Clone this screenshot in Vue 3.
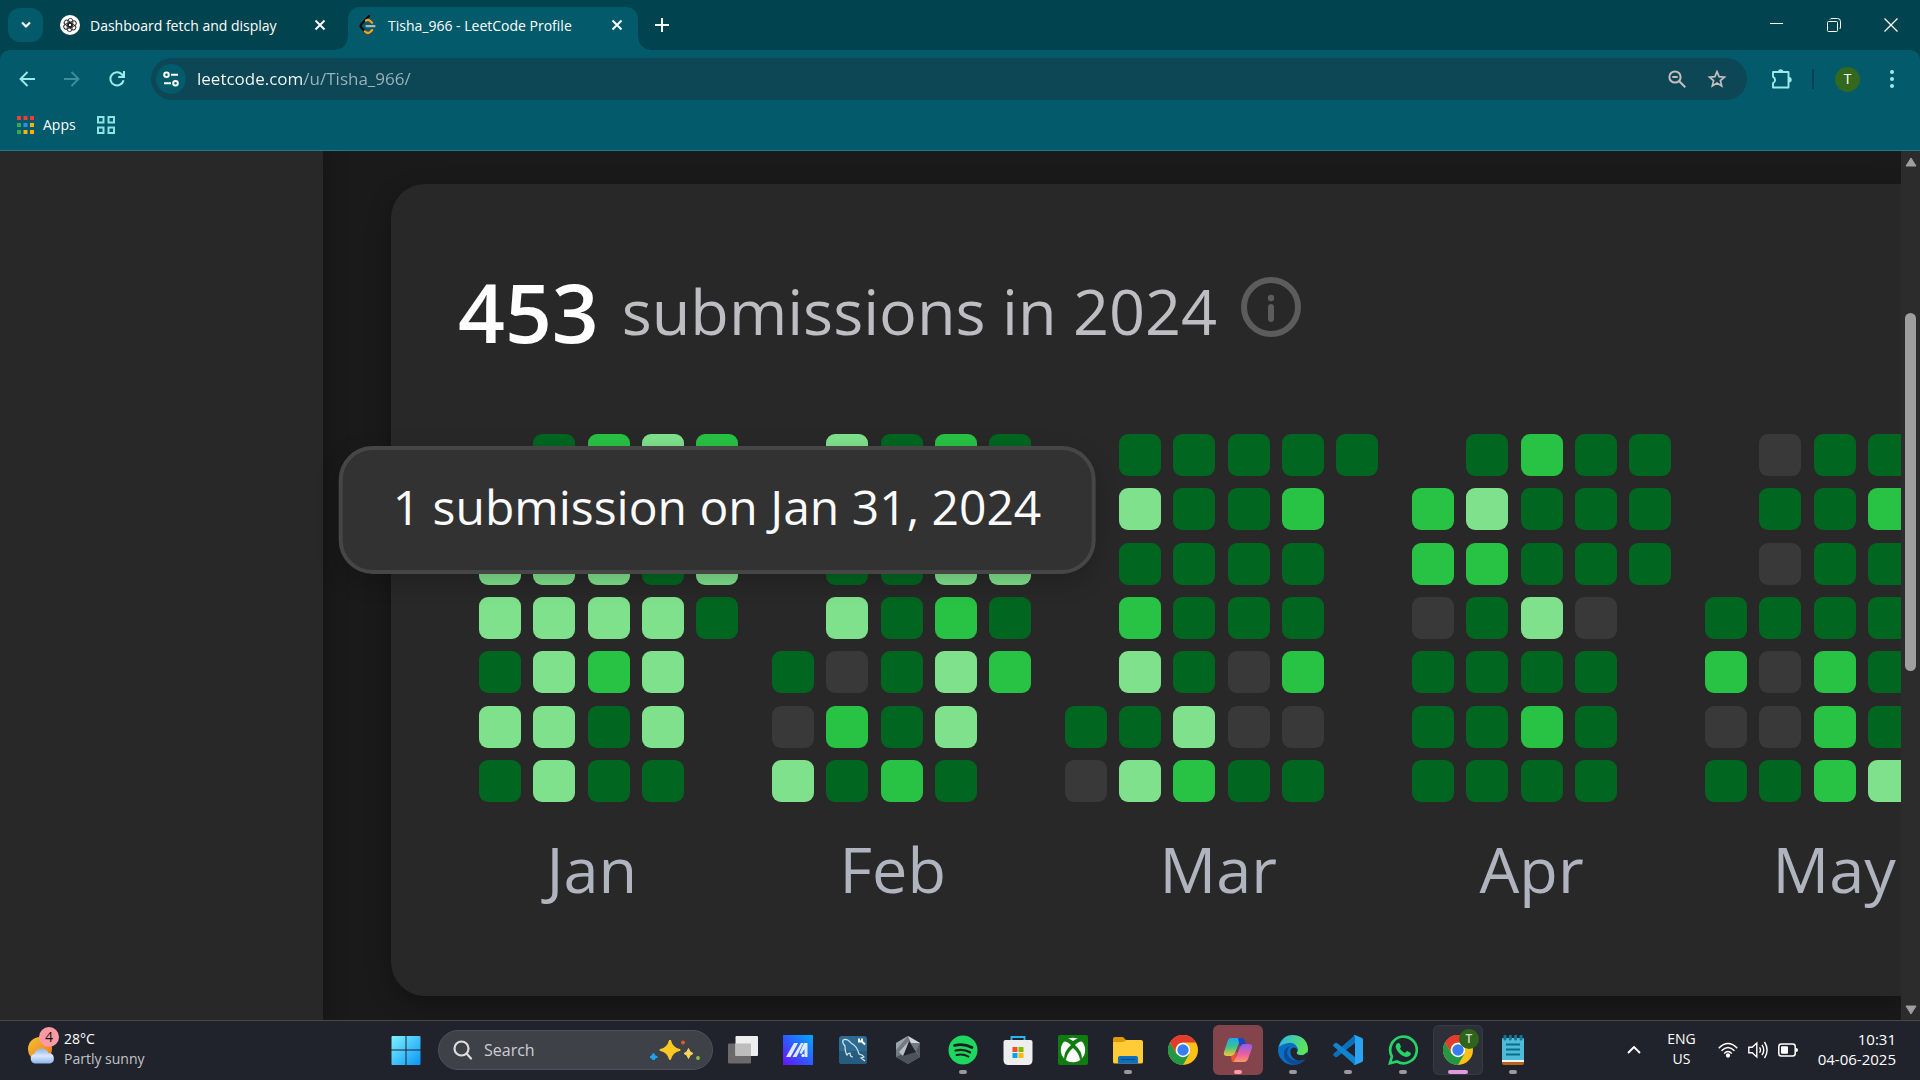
<script setup>
import { ref } from 'vue'

const url = ref('leetcode.com/u/Tisha_966/')
const query = ref('')

const levels = { d: 'low', m: 'mid', l: 'high', e: 'none', '.': 'blank' }

// One string per weekday, Sunday first; one letter per week.
const months = [
  { name: 'Jan', rows: ['.dmlm', 'llldl', 'llldl', 'lllld', 'dlml.', 'lldl.', 'dldd.'] },
  { name: 'Feb', rows: ['.ldmd', '.dddd', '.ddll', '.ldmd', 'dedlm', 'emdl.', 'ldmd.'] },
  { name: 'Mar', wide: true, rows: ['.ddddd', '.lddm.', '.dddd.', '.mddd.', '.ldem.', 'ddlee.', 'elmdd.'] },
  { name: 'Apr', rows: ['.dmdd', 'mlddd', 'mmddd', 'edle.', 'dddd.', 'ddmd.', 'dddd.'] },
  { name: 'May', rows: ['.edd.', '.ddm.', '.edd.', 'dddd.', 'memd.', 'eemd.', 'ddml.'] },
].map((m) => ({ ...m, cells: m.rows.join('').split('').map((c) => levels[c]) }))
</script>

<template>
  <div class="screen">
    <header class="browser">
      <div class="strip">
        <button class="tab-search" aria-label="Search tabs">
          <svg width="12" height="8" viewBox="0 0 12 8"><path d="M2 1.5l4 4 4-4" fill="none" stroke="#fff" stroke-width="2.2" /></svg>
        </button>
        <div class="tab">
          <svg class="favicon" width="20" height="20" viewBox="0 0 20 20">
            <circle cx="10" cy="10" r="10" fill="#fff" />
            <g fill="none" stroke="#222" stroke-width="0.9">
              <rect v-for="a in 6" :key="a" x="8" y="3.4" width="4.8" height="8.4" rx="2.4" :transform="`rotate(${a * 60} 10 10)`" />
            </g>
          </svg>
          <span class="tab-title">Dashboard fetch and display</span>
          <button class="tab-close" aria-label="Close tab">
            <svg width="12" height="12" viewBox="0 0 12 12"><path d="M1.5 1.5l9 9M10.5 1.5l-9 9" stroke="#fff" stroke-width="1.9" /></svg>
          </button>
        </div>
        <div class="tab active">
          <svg class="favicon" width="20" height="20" viewBox="0 0 20 20" fill="none" stroke-width="2.2" stroke-linecap="round">
            <path d="M11 1L3.3 9.3q-1.4 1.6 0 3.2l3.5 3.8" stroke="#0a0a0a" />
            <path d="M8 5.5q2-1.5 4 .3l2 1.9M6.8 16.3q2.800 3 5.400.7l1.900-1.900" stroke="#ffa116" />
            <path d="M8.5 11.2h8" stroke="#b3b3b3" />
          </svg>
          <span class="tab-title">Tisha_966 - LeetCode Profile</span>
          <button class="tab-close" aria-label="Close tab">
            <svg width="12" height="12" viewBox="0 0 12 12"><path d="M1.5 1.5l9 9M10.5 1.5l-9 9" stroke="#fff" stroke-width="1.9" /></svg>
          </button>
        </div>
        <button class="new-tab" aria-label="New tab">
          <svg width="14" height="14" viewBox="0 0 14 14"><path d="M7 0v14M0 7h14" stroke="#fff" stroke-width="2" /></svg>
        </button>
        <div class="window-controls">
          <button aria-label="Minimize"><svg width="14" height="14" viewBox="0 0 14 14"><path d="M0 5.5h13" stroke="#fff" /></svg></button>
          <button aria-label="Restore">
            <svg width="14" height="14" viewBox="0 0 14 14" fill="none" stroke="#fff"><rect x=".5" y="3.5" width="10" height="10" rx="1" /><path d="M3 1.5q.5-1 2-1h5.500q3 0 3 3V9q0 1.500-1 2" /></svg>
          </button>
          <button aria-label="Close"><svg width="14" height="14" viewBox="0 0 14 14"><path d="M.5.5l13 13M13.5.5l-13 13" stroke="#fff" stroke-width="1.3" /></svg></button>
        </div>
      </div>

      <div class="toolbar">
        <nav class="nav">
          <button aria-label="Back"><svg width="16" height="16" viewBox="0 0 16 16" fill="none" stroke="#9cebea" stroke-width="1.9"><path d="M16 8H1.500M8.500 1L1.500 8l7 7" /></svg></button>
          <button aria-label="Forward"><svg width="16" height="16" viewBox="0 0 16 16" fill="none" stroke="#3e8d9b" stroke-width="1.9"><path d="M0 8h14.500M7.500 1l7 7-7 7" /></svg></button>
          <button aria-label="Reload"><svg width="16" height="16" viewBox="0 0 16 16" fill="none" stroke="#9cebea" stroke-width="2"><path d="M14.500 9.200A6.600 6.600 0 1 1 12.800 3.300l1.700 1.900M15 0v5.900H9.200" /></svg></button>
        </nav>
        <form class="omnibox" @submit.prevent>
          <button type="button" class="site-info" aria-label="View site information">
            <svg width="16" height="16" viewBox="0 0 16 16" fill="none" stroke="#fff" stroke-width="2"><circle cx="3.5" cy="3.8" r="2.3" /><path d="M8 3.800h7M1 12.200h7" /><circle cx="12.5" cy="12.2" r="2.3" /></svg>
          </button>
          <input v-model="url" class="address" type="text" aria-label="Address and search bar" />
          <button type="button" aria-label="Zoom">
            <svg width="18" height="18" viewBox="0 0 18 18" fill="none" stroke="#c6bdbd" stroke-width="2"><circle cx="7" cy="7" r="5.6" /><path d="M11 11l6.300 6.300M4.300 7h5.400" /></svg>
          </button>
          <button type="button" aria-label="Bookmark this tab">
            <svg width="20" height="20" viewBox="0 0 20 20" fill="none" stroke="#c6bdbd" stroke-width="1.7"><path d="M10 2.600l2.100 5 5.400.5-4.100 3.500 1.300 5.300L10 14.100l-4.700 2.800 1.300-5.300L2.500 8.100l5.400-.5z" /></svg>
          </button>
        </form>
        <button class="extensions" aria-label="Extensions">
          <svg width="22" height="22" viewBox="0 0 22 22"><path d="M2 4h15.500v15.500H2v-4.300a3.500 3.500 0 0 0 0-6.400z" fill="none" stroke="#9cebea" stroke-width="1.9" stroke-linejoin="round" /><path d="M7 4a2.700 2.700 0 0 1 5.400 0zM18 9a2.700 2.700 0 0 1 0 5.400z" fill="#9cebea" /></svg>
        </button>
        <span class="divider"></span>
        <button class="avatar" aria-label="Profile">T</button>
        <button class="more" aria-label="More">
          <svg width="6" height="18" viewBox="0 0 6 18" fill="#9cebea"><circle cx="3" cy="2" r="2" /><circle cx="3" cy="9" r="2" /><circle cx="3" cy="16" r="2" /></svg>
        </button>
      </div>

      <div class="bookmarks">
        <a href="#apps" class="bookmark">
          <svg width="17" height="18" viewBox="0 0 17 18">
            <path d="M0 0h4v4H0zM6.500 0h4v4h-4zM13 0h4v4h-4z" fill="#ee3e36" />
            <path d="M0 7h4v4H0zM0 14h4v4H0z" fill="#34a853" /><path d="M6.500 7h4v4h-4z" fill="#2d8cf0" />
            <path d="M13 7h4v4h-4zM6.500 14h4v4h-4zM13 14h4v4h-4z" fill="#fbb10a" />
          </svg>
          Apps
        </a>
        <button class="groups" aria-label="Tab groups">
          <svg width="18" height="18" viewBox="0 0 18 18" fill="none" stroke="#8fe3e4" stroke-width="2"><path d="M1 1h5.500v5.500H1zM11.500 1H17v5.500h-5.500zM1 11.500h5.500V17H1zM11.500 11.500H17V17h-5.500z" /></svg>
        </button>
      </div>
    </header>

    <main class="page">
      <aside class="side"></aside>
      <section class="card">
        <h1 class="heading">
          <strong>453</strong>
          <span>submissions in 2024</span>
          <svg class="info" width="60" height="60" viewBox="0 0 60 60" fill="#5c5c5c"><circle cx="30" cy="30" r="27" fill="none" stroke="#5c5c5c" stroke-width="6" /><circle cx="30" cy="21" r="3.2" /><rect x="27" y="27" width="6" height="18" rx="3" /></svg>
        </h1>
        <div class="calendar">
          <div v-for="m in months" :key="m.name" class="month" :class="{ wide: m.wide }">
            <div class="days"><i v-for="(level, i) in m.cells" :key="i" :class="level"></i></div>
            <span class="month-name">{{ m.name }}</span>
          </div>
          <div class="tooltip" role="tooltip">1 submission on Jan 31, 2024</div>
        </div>
      </section>
      <div class="scrollbar">
        <svg width="12" height="10" viewBox="0 0 12 10"><path d="M6 1l5 8H1z" fill="#9f9f9f" stroke="#9f9f9f" stroke-linejoin="round" /></svg>
        <div class="track"><div class="thumb"></div></div>
        <svg width="12" height="10" viewBox="0 0 12 10"><path d="M6 9l5-8H1z" fill="#9f9f9f" stroke="#9f9f9f" stroke-linejoin="round" /></svg>
      </div>
    </main>

    <footer class="taskbar">
      <button class="weather">
        <span class="weather-icon">
          <svg width="28" height="28" viewBox="0 0 28 28">
            <defs>
              <linearGradient id="sun" x1="0" y1="0" x2="1" y2="1"><stop stop-color="#f5c433" /><stop offset="1" stop-color="#f07318" /></linearGradient>
              <linearGradient id="cloud" x1="0" y1="0" x2="0" y2="1"><stop stop-color="#8fb4f3" /><stop offset=".5" stop-color="#dbe7fb" /><stop offset="1" stop-color="#8db2f0" /></linearGradient>
            </defs>
            <circle cx="12" cy="13" r="12" fill="url(#sun)" />
            <path d="M7 27.500a5 5 0 0 1-.5-9.800 7.500 7.500 0 0 1 14-.6 5.300 5.300 0 0 1 1.500 10.400z" fill="url(#cloud)" />
          </svg>
          <span class="badge">4</span>
        </span>
        <span class="two-line"><span>28°C</span><span class="dim">Partly sunny</span></span>
      </button>

      <div class="dock">
        <button class="app start" aria-label="Start">
          <svg width="30" height="30" viewBox="0 0 30 30">
            <defs><linearGradient id="win" x1="0" y1="0" x2="1" y2="1"><stop stop-color="#7df3ff" /><stop offset="1" stop-color="#0a94f7" /></linearGradient></defs>
            <path d="M1.500 1H14.500v13.500H.5V2q0-1 1-1zM15.500 1h13q1 0 1 1v12.500H15.500zM.5 15.500h14V30h-13q-1 0-1-1zM15.500 15.500h14V29q0 1-1 1h-13z" fill="url(#win)" />
          </svg>
        </button>
        <label class="search">
          <svg width="20" height="20" viewBox="0 0 20 20" fill="none" stroke="#dcdcdf" stroke-width="2.2" stroke-linecap="round"><circle cx="8.5" cy="8.5" r="7" /><path d="M13.500 13.500l4.500 5" /></svg>
          <input v-model="query" type="search" placeholder="Search" aria-label="Search" />
          <svg width="50" height="20" viewBox="0 0 50 20">
            <path d="M20 .5q2 8 9.500 9.500-7.500 1.500-9.500 9-2-7.500-9.500-9 7.500-1.500 9.500-9.500z" fill="#fcc822" stroke="#fcc822" stroke-width="2" stroke-linejoin="round" />
            <path d="M38.500 8.500q1 4 4.500 5-3.500 1-4.500 5-1-4-4.500-5 3.500-1 4.500-5z" fill="#fcd35c" stroke="#fcd35c" stroke-linejoin="round" />
            <path d="M3.500 13q.5 3 4 4-3 .5-4 4-.5-3-4-4 3.500-1 4-4z" fill="#18a8ee" stroke="#18a8ee" />
            <circle cx="33" cy="2.500" r="2" fill="#e5582b" /><circle cx="48" cy="18" r="1.900" fill="#8bc34a" />
          </svg>
        </label>
        <button class="app" aria-label="Task view">
          <svg width="30" height="30" viewBox="0 0 30 30"><rect y="8.500" width="23" height="20" rx="1" fill="#6b6969" /><rect x="7.500" y="1" width="22.500" height="20" rx="1" fill="#eee" /><path d="M7.500 8.500H23V21H7.500z" fill="#bdbdbd" /></svg>
        </button>
        <button class="app" aria-label="MyASUS">
          <svg width="30" height="30" viewBox="0 0 30 30"><defs><linearGradient id="my" x1="0" y1="1" x2="1" y2="0"><stop stop-color="#6a12fb" /><stop offset=".5" stop-color="#2d5cff" /><stop offset="1" stop-color="#00aaff" /></linearGradient></defs><path d="M0 0h30v30H0z" fill="url(#my)" /><path d="M3 22L11 8h4L7.500 22zM9.500 22L18 8h2.500L13.500 22zM21 8h3.500v14h-3V14l-3 5-2-1z" fill="#dfe9ff" /><circle cx="20" cy="20.500" r="1.500" fill="#fff" /></svg>
        </button>
        <button class="app" aria-label="MySQL Workbench">
          <svg width="30" height="30" viewBox="0 0 30 30"><rect x="1" y="1" width="28" height="28" rx="3" fill="#2e6b92" /><path d="M1 16h28v10q0 3-3 3H4q-3 0-3-3z" fill="#265c7e" /><path d="M5 5q4-2 8 3 6 3 8 11 4 1 5 3l-3 1 4 3M5 5q-1 3 2 6 0 6 2 9 1-2 3-2 0 4 3 4" fill="none" stroke="#d8e6ef" stroke-width="1.2" /><path d="M21 3.500v3h3v-3M24 6.500l3 3" fill="none" stroke="#fff" stroke-width="2" /></svg>
        </button>
        <button class="app" aria-label="Armoury Crate">
          <svg width="30" height="30" viewBox="0 0 30 30"><path d="M15 1l12 7v14l-12 7-12-7V8z" fill="#737a82" /><path d="M15 1l12 7-9 0z" fill="#d2d6da" /><path d="M15 1L3 8v7z" fill="#9da3aa" /><path d="M27 8v14l-4-6z" fill="#535960" /><path d="M3 22l7-3 12-3 5 6-12 7z" fill="#4d535a" /><path d="M16 6l7 11-13 4z" fill="#20242b" /><path d="M16 6l-6 15-4-4z" fill="#b9bec4" /></svg>
        </button>
        <button class="app running" aria-label="Spotify">
          <svg width="30" height="30" viewBox="0 0 30 30"><circle cx="15" cy="15" r="14.500" fill="#1ed760" /><g fill="none" stroke="#17201c" stroke-linecap="round"><path d="M6.500 10.500q9-2.500 17.500 2" stroke-width="2.7" /><path d="M7.500 15.500q8-2 14.500 1.800" stroke-width="2.3" /><path d="M8.500 20q6.500-1.500 12 1.600" stroke-width="1.9" /></g></svg>
        </button>
        <button class="app" aria-label="Microsoft Store">
          <svg width="30" height="30" viewBox="0 0 30 30"><path d="M8.500 6.500V2h13v4.500" fill="none" stroke="#27b6f0" stroke-width="1.9" /><path d="M.5 7q0-2 2-2h25q2 0 2 2v18q0 5-5 5h-19q-5 0-5-5z" fill="#eee" /><path d="M9.500 12h5v5h-5z" fill="#f25022" /><path d="M15.500 12h5v5h-5z" fill="#7fba00" /><path d="M9.500 18h5v5h-5z" fill="#00a4ef" /><path d="M15.500 18h5v5h-5z" fill="#ffb900" /></svg>
        </button>
        <button class="app" aria-label="Xbox">
          <svg width="30" height="30" viewBox="0 0 30 30"><rect width="30" height="30" rx="2" fill="#107c10" /><circle cx="15" cy="15" r="12.200" fill="#fff" /><path d="M8 4q3-1 7 2 4-3 7-2l3 3q-3-2-8 3 7 6 7 14l-2 1q-1-7-7-12-6 5-7 12l-2-1q0-8 7-14-5-5-8-3z" fill="#107c10" /></svg>
        </button>
        <button class="app running" aria-label="File Explorer">
          <svg width="30" height="30" viewBox="0 0 30 30"><path d="M0 4q0-2 2-2h8l3 3-3 3H0z" fill="#e09a05" /><path d="M0 7h10l3-2h15q2 0 2 2v20q0 1.500-2 1.500H2Q0 28.500 0 27z" fill="#ffcb37" /><path d="M5 28.500V23q0-2 2-2h16q2 0 2 2v5.500z" fill="#0b70c0" /><path d="M8 24.500h14" stroke="#0a4f8c" stroke-width="1.2" /></svg>
        </button>
        <button class="app" aria-label="Google Chrome">
          <svg width="30" height="30" viewBox="0 0 30 30"><circle cx="15" cy="15" r="15" fill="#fbc116" /><path d="M2 7.500a15 15 0 0 1 26 0H15z" fill="#e33b2e" /><path d="M15 7.500a7.500 7.500 0 0 0-6.500 11.200L2 7.500a15 15 0 0 1 13-7.500z" fill="#e33b2e" /><path d="M2 7.500A15 15 0 0 0 15 30l6.500-11.200H8.500z" fill="#249745" /><circle cx="15" cy="15" r="7.200" fill="#fff" /><circle cx="15" cy="15" r="5.700" fill="#377ef2" /></svg>
        </button>
        <button class="app running attention" aria-label="Copilot">
          <svg width="30" height="30" viewBox="0 0 30 30"><defs><linearGradient id="cpa" x1="0" y1="0" x2="0" y2="1"><stop stop-color="#1aa9f3" /><stop offset=".5" stop-color="#3fc38b" /><stop offset="1" stop-color="#f4c53a" /></linearGradient><linearGradient id="cpb" x1="0" y1="0" x2="0" y2="1"><stop stop-color="#8d5df0" /><stop offset=".6" stop-color="#ee5f9d" /><stop offset="1" stop-color="#fb9a64" /></linearGradient></defs><path d="M5 5q1-2 3-2h11l-3 5-4 10q-1 3-4 3H4q-4 0-3-4z" fill="url(#cpa)" /><path d="M25 24q-1 3-4 3H10l3-5 4-10q1-3 4-3h5q4 0 3 4z" fill="url(#cpb)" /><path d="M15 3h4q2 0 2.500 2L23 9h-2q-3 0-4 3z" fill="#1747c4" /><path d="M8 21q3 0 4-3l2-1-2 7q-.5 3-2 3-1 0-1.500-2z" fill="#f0562e" /></svg>
        </button>
        <button class="app running" aria-label="Microsoft Edge">
          <svg width="30" height="30" viewBox="0 0 30 30"><defs><linearGradient id="eda" x1="0" y1="0" x2="1" y2=".3"><stop stop-color="#2bb5ee" /><stop offset="1" stop-color="#5de45a" /></linearGradient></defs><circle cx="15" cy="15" r="15" fill="#0c6dc5" /><path d="M1 12Q4 0 15 0q14 1 15 14 0 6-7 6-5 0-4-3 2-2 0-5-3-5-9-4-6 1-9 4z" fill="url(#eda)" /><path d="M10 14q-2 4 1 8 5 6 14 2l3-1q-4 7-12 7-9-3-10-9-1-8 6-10z" fill="#0d4c94" /><path d="M13 14q3-3 6 0 1 2-.5 4 1 3 7 2l4-3v6l-2 1q-10 4-14-3-2-4-.5-7z" fill="#22252e" /></svg>
        </button>
        <button class="app running" aria-label="Visual Studio Code">
          <svg width="30" height="30" viewBox="0 0 30 30"><path d="M22 8L4 22q-1 .6-1.800 0L.5 20.500q-1-1 0-1.800L22 0z" fill="#0b6fb9" /><path d="M22 22L4 8q-1-.6-1.800 0L.5 9.500q-1 1 0 1.800L22 30z" fill="#1283cf" /><path d="M22 0l7 3q1 .5 1 1.500v21q0 1-1 1.500l-7 3q-1 0-1.500-1 1.500.5 1.500-1V2q0-1.500-1.500-1 .5-1 1.500-1z" fill="#2aa4f2" /></svg>
        </button>
        <button class="app running" aria-label="WhatsApp">
          <svg width="30" height="30" viewBox="0 0 30 30"><path d="M2 28.200l1.900-6.800A13.300 13.300 0 1 1 9 26.500z" fill="none" stroke="#25d366" stroke-width="2.7" /><path d="M10.500 8q1 0 1.400 1l1 2.500q.2.800-1 2 2 3.500 5 4.500l1.500-1.500q.7-.7 1.500-.2l2.500 1.400q.8.5.4 1.600-1 2.700-4 2.700-5-.5-9-5.500-3.500-5-1.300-7.500.8-1 2-1z" fill="#25d366" /></svg>
        </button>
        <button class="app running current" aria-label="Google Chrome, T">
          <svg width="30" height="30" viewBox="0 0 30 30"><circle cx="15" cy="15" r="15" fill="#fbc116" /><path d="M2 7.500a15 15 0 0 1 26 0H15z" fill="#e33b2e" /><path d="M15 7.500a7.500 7.500 0 0 0-6.500 11.200L2 7.500a15 15 0 0 1 13-7.500z" fill="#e33b2e" /><path d="M2 7.500A15 15 0 0 0 15 30l6.500-11.200H8.500z" fill="#249745" /><circle cx="15" cy="15" r="7.200" fill="#fff" /><circle cx="15" cy="15" r="5.700" fill="#377ef2" /></svg>
          <span class="profile">T</span>
        </button>
        <button class="app running" aria-label="Notepad">
          <svg width="30" height="30" viewBox="0 0 30 30"><path d="M4 24h22v4q0 2-2 2H6q-2 0-2-2z" fill="#b5651b" /><path d="M4 25h22v2H4z" fill="#f3f3f3" /><path d="M4 4q0-1 1-1h20q1 0 1 1v21H4z" fill="#4ebcd8" /><path d="M8 9.500h14M8 14.500h14M8 19.500h14" stroke="#0b6c8a" stroke-width="1.9" /><path d="M7 1v3M12.300 1v3M17.600 1v3M23 1v3" stroke="#127694" stroke-width="3" stroke-linecap="round" /></svg>
        </button>
      </div>

      <div class="tray">
        <button class="tray-more" aria-label="Show hidden icons"><svg width="14" height="8" viewBox="0 0 14 8"><path d="M1 7l6-6 6 6" fill="none" stroke="#fff" stroke-width="1.9" /></svg></button>
        <button class="two-line lang"><span>ENG</span><span>US</span></button>
        <button class="status" aria-label="Network, volume and battery">
          <svg width="20" height="16" viewBox="0 0 20 16" fill="none" stroke="#fff" stroke-width="1.5"><path d="M.7 6.200q9.300-9.400 18.600 0M3.500 8.800q6.500-6.600 13 0M6.200 11.500q3.800-3.800 7.600 0" /><circle cx="10" cy="13.500" r="1.400" fill="#fff" /></svg>
          <svg width="20" height="18" viewBox="0 0 20 18" fill="none" stroke="#fff" stroke-width="1.4"><path d="M.8 6.200h3.400L8.800 2v14l-4.600-4.200H.8zM11.500 6.300q2 2.700 0 5.400M14 3.800q3.500 5.200 0 10.400M16.500 1q5.200 8 0 16" /></svg>
          <svg width="20" height="14" viewBox="0 0 20 14"><rect x=".8" y="1" width="16.400" height="12" rx="2.500" fill="none" stroke="#fff" stroke-width="1.5" /><rect x="3" y="3.200" width="7" height="7.600" rx="1" fill="#fff" /><path d="M18 5q2 0 2 2t-2 2z" fill="#fff" /></svg>
        </button>
        <button class="two-line clock"><span>10:31</span><span>04-06-2025</span></button>
      </div>
    </footer>
  </div>
</template>

<style>
body {
  margin: 0;
  background: #1a1a1a;
}
</style>

<style scoped>
.screen {
  min-height: 100vh;
  display: flex;
  flex-direction: column;
  overflow: hidden;
  font: 14px/20px "Open Sans", "Noto Sans", sans-serif;
  color: #fff;
}

.screen * {
  box-sizing: border-box;
}

svg {
  display: block;
  flex: none;
}

button {
  padding: 0;
  border: 0;
  background: none;
  color: inherit;
  font: inherit;
  display: flex;
  align-items: center;
  justify-content: center;
  flex: none;
}

input {
  min-width: 0;
  flex: 1;
  padding: 0;
  border: 0;
  outline: 0;
  background: none;
  color: inherit;
  font: inherit;
}

/* Browser chrome */
.browser {
  background: #014450;
  border-bottom: 1px solid #1f7c88;
}

.strip {
  display: flex;
  height: 50px;
  padding-left: 8px;
}

.tab-search {
  width: 35px;
  height: 34px;
  margin-top: 8px;
  border-radius: 12px;
  background: #025a6b;
}

.tab {
  position: relative;
  display: flex;
  align-items: center;
  width: 290px;
  height: 43px;
  margin-top: 7px;
  padding: 0 12px 8px 10px;
}

.tab:not(.active) {
  width: 305px;
  padding: 0 19px 8px 17px;
}

.tab.active {
  border-radius: 12px 12px 0 0;
  background: #025a6b;
}

.tab.active::before,
.tab.active::after {
  content: "";
  position: absolute;
  bottom: 0;
  width: 12px;
  height: 12px;
}

.tab.active::before {
  left: -12px;
  background: radial-gradient(circle at 0 0, transparent 11px, #025a6b 12px);
}

.tab.active::after {
  right: -12px;
  background: radial-gradient(circle at 100% 0, transparent 11px, #025a6b 12px);
}

.tab-title {
  flex: 1;
  margin-left: 10px;
  padding-top: 2px;
  white-space: nowrap;
}

.tab-close {
  width: 18px;
  height: 18px;
}

.new-tab {
  width: 30px;
  margin-left: 9px;
}

.window-controls {
  display: flex;
  margin-left: auto;
  padding-right: 1px;
}

.window-controls button {
  width: 57px;
}

.toolbar {
  display: flex;
  align-items: center;
  height: 58px;
  padding: 0 25px 0 19px;
  background: #025a6b;
  border-radius: 10px 10px 0 0;
}

.nav {
  display: flex;
  gap: 29px;
  margin-right: 26px;
}

.omnibox {
  display: flex;
  align-items: center;
  flex: 1;
  height: 42px;
  padding: 0 20px 0 5px;
  border-radius: 21px;
  background: #0d4756;
}

.site-info {
  width: 30px;
  height: 30px;
  margin-right: 11px;
  border-radius: 50%;
  background: #025a6b;
}

.address {
  font-size: 17px;
  line-height: 24px;
  background: linear-gradient(to right, #fff 107px, #9db4bb 107px) text;
  color: transparent;
  caret-color: #fff;
}

.omnibox > button + button {
  margin-left: 21px;
}

.extensions {
  margin-left: 24px;
}

.divider {
  width: 2px;
  height: 20px;
  margin: 0 21px 0 19px;
  background: #014450;
}

.avatar {
  width: 25px;
  height: 25px;
  border-radius: 50%;
  background: #33691e;
  font-size: 14px;
}

.more {
  width: 6px;
  margin-left: 29px;
}

.bookmarks {
  display: flex;
  align-items: center;
  height: 42px;
  padding: 0 17px 8px;
  background: #025a6b;
}

.bookmark {
  display: flex;
  align-items: center;
  gap: 9px;
  color: #fff;
  text-decoration: none;
}

.groups {
  margin-left: 21px;
}

/* Page */
.page {
  display: flex;
  flex: 1;
  overflow: hidden;
  background: #1a1a1a;
}

.side {
  flex: none;
  width: 323px;
  background: #282828;
  box-shadow: 0 0 24px rgba(0, 0, 0, 0.3);
}

.card {
  flex: 1;
  min-width: 0;
  margin: 33px 0 24px 68px;
  padding: 83px 0 87px 67px;
  border-radius: 34px 0 0 34px;
  background: #282828;
  box-shadow: 0 8px 24px rgba(0, 0, 0, 0.3);
}

.heading {
  display: flex;
  align-items: center;
  height: 88px;
  margin: 0 0 79px;
  font-weight: 400;
  white-space: nowrap;
}

.heading strong {
  font-size: 82px;
  font-weight: 600;
  line-height: 88px;
}

.heading span {
  margin-left: 23px;
  color: #bdbdc2;
  font-size: 63px;
  line-height: 88px;
}

.info {
  align-self: flex-start;
  margin: 10px 0 0 24px;
}

.calendar {
  position: relative;
  display: flex;
  gap: 34px;
  padding-left: 21px;
}

.month {
  flex: none;
  width: 259px;
}

.month.wide {
  width: 313px;
}

.days {
  display: grid;
  grid-template: repeat(7, 42px) / repeat(5, 42px);
  align-content: space-between;
  justify-content: space-between;
  height: 368px;
}

.wide .days {
  grid-template-columns: repeat(6, 42px);
}

.days i {
  border-radius: 9px;
}

.low {
  background: #016620;
}

.mid {
  background: #28c244;
}

.high {
  background: #7fe18b;
}

.none {
  background: #393939;
}

.month-name {
  display: block;
  margin: 27px 0 0 calc(50% - 62px);
  color: #afb4bf;
  font-size: 63px;
  line-height: 80px;
}

.tooltip {
  position: absolute;
  top: 12px;
  left: 259px;
  transform: translateX(-50%);
  padding: 17px 50px 23px;
  border: 4px solid #464646;
  border-radius: 34px;
  background: #323232;
  box-shadow: 0 8px 24px rgba(0, 0, 0, 0.2);
  color: #fafafa;
  font-size: 48px;
  line-height: 80px;
  white-space: nowrap;
}

.scrollbar {
  position: relative;
  display: flex;
  flex-direction: column;
  align-items: center;
  flex: none;
  width: 19px;
  padding: 6px 0 5px;
  background: #2c2c2c;
}

.track {
  flex: 1;
  width: 11px;
  display: grid;
  grid-template-rows: 146fr 358fr 334fr;
}

.thumb {
  grid-row: 2;
  border-radius: 6px;
  background: #9f9f9f;
}

/* Taskbar */
.taskbar {
  display: grid;
  grid-template-columns: 1fr auto 1fr;
  height: 60px;
  padding-bottom: 1px;
  border-top: 1px solid #46484a;
  background: #20232c;
}

.weather {
  justify-self: start;
  gap: 8px;
  padding-left: 28px;
  text-align: left;
}

.weather-icon {
  position: relative;
}

.badge {
  position: absolute;
  top: -9px;
  left: 11px;
  width: 20px;
  height: 20px;
  border-radius: 50%;
  background: #ff99a4;
  color: #111;
  text-align: center;
}

.two-line {
  display: flex;
  flex-direction: column;
  padding-bottom: 2px;
}

.dim {
  color: #c3c4c7;
}

.dock {
  display: flex;
  align-items: center;
  gap: 5px;
  padding-right: 1px;
}

.app {
  position: relative;
  width: 50px;
  height: 50px;
  border-radius: 6px;
}

.app.running::after {
  content: "";
  position: absolute;
  bottom: 1px;
  left: 21px;
  width: 8px;
  height: 4px;
  border-radius: 2px;
  background: #9a9a9e;
}

.app.attention {
  background: #83454b;
}

.app.attention::after {
  background: #ff99a4;
}

.app.current {
  background: #2d3039;
  box-shadow: inset 0 0 0 1px #373a42;
}

.app.current::after {
  left: 15px;
  width: 20px;
  background: #dd9be0;
}

.profile {
  position: absolute;
  top: 4px;
  right: 4px;
  width: 20px;
  height: 20px;
  border-radius: 50%;
  background: #2f641b;
  color: #cfd8cb;
  font-size: 12px;
  font-weight: 600;
}

.search {
  display: flex;
  align-items: center;
  width: 275px;
  height: 40px;
  margin-left: 2px;
  padding: 0 12px 0 14px;
  border: 1px solid #4f5157;
  border-radius: 20px;
  background: #3f4148;
}

.search input {
  margin-left: 11px;
  font-size: 16px;
  line-height: 24px;
  appearance: none;
}

.search input::placeholder {
  color: #cdced1;
  opacity: 1;
}

.tray {
  display: flex;
  align-items: center;
  justify-self: end;
  padding-right: 24px;
}

.lang {
  margin: 0 22px 0 26px;
}

.status {
  gap: 10px;
}

.clock {
  align-items: flex-end;
  margin-left: 20px;
  font-size: 15px;
}
</style>
